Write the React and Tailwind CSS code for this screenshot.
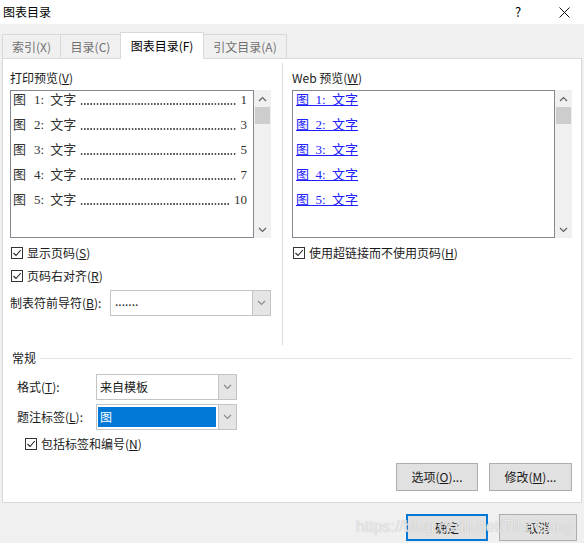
import React from 'react'

const ui = "font-[family-name:'Noto_Sans_CJK_SC',sans-serif]"
const serif = "font-[family-name:'Liberation_Serif','Noto_Sans_CJK_SC',serif]"

const entries = [
  { n: 1, page: 1 },
  { n: 2, page: 3 },
  { n: 3, page: 5 },
  { n: 4, page: 7 },
  { n: 5, page: 10 },
]

function Chevron({ dir = 'down', className = '' }) {
  return (
    <svg width="9" height="6" viewBox="0 0 9 6" className={className}>
      <polyline
        points={dir === 'down' ? '1,1 4.5,4.5 8,1' : '1,5 4.5,1.5 8,5'}
        fill="none"
        stroke="currentColor"
        strokeWidth="1.2"
      />
    </svg>
  )
}

function Scrollbar() {
  return (
    <div className="w-[17px] h-full bg-[#f0f0f0] flex flex-col">
      <div className="h-[17px] flex items-center justify-center text-[#606060]">
        <Chevron dir="up" />
      </div>
      <div className="h-[17px] mx-[1px] bg-[#cdcdcd]" />
      <div className="flex-1" />
      <div className="h-[17px] flex items-center justify-center text-[#606060]">
        <Chevron />
      </div>
    </div>
  )
}

function Checkbox({ children, className = '' }) {
  return (
    <div className={`flex items-center h-[18px] ${className}`}>
      <div className="w-[12px] h-[12px] border border-[#333] bg-white flex items-center justify-center">
        <svg width="10" height="10" viewBox="0 0 10 10">
          <polyline points="1.5,5 4,7.5 8.8,2" fill="none" stroke="#222" strokeWidth="1.1" />
        </svg>
      </div>
      <span className="ml-[4px] leading-[18px]">{children}</span>
    </div>
  )
}

function Select({ className = '', children }) {
  return (
    <div className={`flex h-[26px] border border-[#c4c4c4] bg-white ${className}`}>
      <div className="flex-1 flex items-center min-w-0">{children}</div>
      <div className="w-[18px] bg-[#e5e5e5] border-l border-[#c4c4c4] flex items-center justify-center text-[#8a8a8a]">
        <Chevron />
      </div>
    </div>
  )
}

function Button({ children, className = '' }) {
  return (
    <div className={`h-[28px] bg-[#e1e1e1] border border-[#adadad] flex items-center justify-center ${className}`}>
      {children}
    </div>
  )
}

export default function App() {
  return (
    <div className={`relative w-[584px] h-[543px] bg-[#f0f0f0] overflow-hidden text-[12px] text-[#1a1a1a] ${ui}`}>
      {/* title bar */}
      <div className="h-[24px] bg-white flex items-center pl-[3px]">
        <span className="text-[12px] text-black">图表目录</span>
        <div className="flex-1" />
        <span className="text-[13px] text-black w-[10px] mr-[34px]">?</span>
        <svg width="11" height="11" viewBox="0 0 11 11" className="mr-[14px]">
          <path d="M0.5 0.5 L10.5 10.5 M10.5 0.5 L0.5 10.5" stroke="#111" strokeWidth="1" />
        </svg>
      </div>

      {/* tabs */}
      <div className="h-[34px] flex items-end pl-[2px]">
        <div className="w-[58px] h-[24px] border-t border-l border-[#d9d9d9] flex items-center justify-center text-[#707070]">索引(X)</div>
        <div className="w-[60px] h-[24px] border-t border-l border-[#d9d9d9] flex items-center justify-center text-[#707070]">目录(C)</div>
        <div className="relative z-10 -mb-px w-[84px] h-[27px] bg-white border-t border-x border-[#d9d9d9] flex items-center justify-center text-black">图表目录(F)</div>
        <div className="w-[83px] h-[24px] border-t border-r border-[#d9d9d9] flex items-center justify-center text-[#707070]">引文目录(A)</div>
      </div>

      {/* panel */}
      <div className="ml-[2px] w-[580px] h-[445px] bg-white border border-[#d9d9d9] flex flex-col">
        <div className="h-[286px] flex pl-[7px]">
          {/* print preview */}
          <div className="w-[261px] flex flex-col">
            <div className="mt-[11px] h-[16px] leading-[16px]">打印预览(<u>V</u>)</div>
            <div className="mt-[4px] h-[148px] flex">
              <div className={`w-[244px] h-full border border-[#828790] bg-white flex flex-col gap-[7px] pl-[2px] pr-[6px] ${serif} text-[13px] text-[#333]`}>
                {entries.map((e) => (
                  <div key={e.n} className="h-[18px] leading-[18px] flex whitespace-nowrap">
                    <span>图</span>
                    <span className="ml-[8px]">{e.n}:</span>
                    <span className="ml-[6px]">文字</span>
                    <div className="ml-[4px] mr-[4px] flex-1 self-end mb-[4px] h-[2px] bg-[radial-gradient(circle,#555_0.7px,transparent_1px)] bg-[length:3.2px_2px] bg-repeat-x" />
                    <span>{e.page}</span>
                  </div>
                ))}
              </div>
              <Scrollbar />
            </div>
            <Checkbox className="mt-[6px] pl-[1px]">
              显示页码(<u>S</u>)
            </Checkbox>
            <Checkbox className="mt-[5px] pl-[1px]">
              页码右对齐(<u>R</u>)
            </Checkbox>
            <div className="mt-[5px] flex items-center">
              <span className="w-[100px]">制表符前导符(<u>B</u>):</span>
              <Select className="w-[161px]">
                <span className="pl-[4px] text-[12px] leading-none -mt-[4px]">.......</span>
              </Select>
            </div>
          </div>

          <div className="w-[11px]" />
          <div className="w-px h-[282px] mt-[4px] bg-[#dcdcdc]" />
          <div className="w-[9px]" />

          {/* web preview */}
          <div className="w-[280px] flex flex-col">
            <div className="mt-[11px] h-[16px] leading-[16px]">Web 预览(<u>W</u>)</div>
            <div className="mt-[4px] h-[148px] flex">
              <div className={`w-[263px] h-full border border-[#828790] bg-white flex flex-col gap-[7px] pl-[3px] ${serif} text-[13px] text-[#2020ff]`}>
                {entries.map((e) => (
                  <div key={e.n} className="h-[18px] leading-[18px] flex">
                    <span className="underline whitespace-nowrap">
                      {`图\u00a0\u00a0${e.n}:\u00a0\u00a0文字`}
                    </span>
                  </div>
                ))}
              </div>
              <Scrollbar />
            </div>
            <Checkbox className="mt-[6px] pl-[1px]">
              使用超链接而不使用页码(<u>H</u>)
            </Checkbox>
          </div>
        </div>

        {/* general */}
        <div className="mt-[5px] h-[16px] flex items-center pl-[9px] pr-[9px]">
          <span className="leading-[16px]">常规</span>
          <div className="ml-[4px] flex-1 h-px bg-[#e3e3e3]" />
        </div>
        <div className="mt-[8px] flex items-center pl-[14px]">
          <span className="w-[79px]">格式(<u>T</u>):</span>
          <Select className="w-[141px]">
            <span className="pl-[3px]">来自模板</span>
          </Select>
        </div>
        <div className="mt-[4px] flex items-center pl-[14px]">
          <span className="w-[79px]">题注标签(<u>L</u>):</span>
          <Select className="w-[141px]">
            <div className="m-[2px] ml-[1px] h-[20px] flex-1 bg-[#0078d7] text-white flex items-center pl-[2px]">图</div>
          </Select>
        </div>
        <Checkbox className="mt-[5px] pl-[22px]">
          包括标签和编号(<u>N</u>)
        </Checkbox>
        <div className="mt-[10px] flex justify-end gap-[11px] pr-[9px]">
          <Button className="w-[82px]">选项(<u>O</u>)...</Button>
          <Button className="w-[83px]">修改(<u>M</u>)...</Button>
        </div>
      </div>

      {/* dialog buttons */}
      <div className="mt-[11px] flex justify-end gap-[11px] pr-[7px]">
        <div className="w-[82px] h-[27px] bg-[#e1e1e1] border border-[#0078d7] shadow-[inset_0_0_0_1px_#0078d7] flex items-center justify-center">确定</div>
        <div className="w-[78px] h-[27px] bg-[#e1e1e1] border border-[#adadad] flex items-center justify-center">取消</div>
      </div>

      {/* screenshot watermark */}
      <span className="absolute left-[356px] top-[515px] text-[16px] text-white/70 font-[family-name:'Liberation_Sans',sans-serif] [text-shadow:0_0_1px_#aaa] pointer-events-none">
        https://blog.csdn.net/TinaGang
      </span>
    </div>
  )
}
